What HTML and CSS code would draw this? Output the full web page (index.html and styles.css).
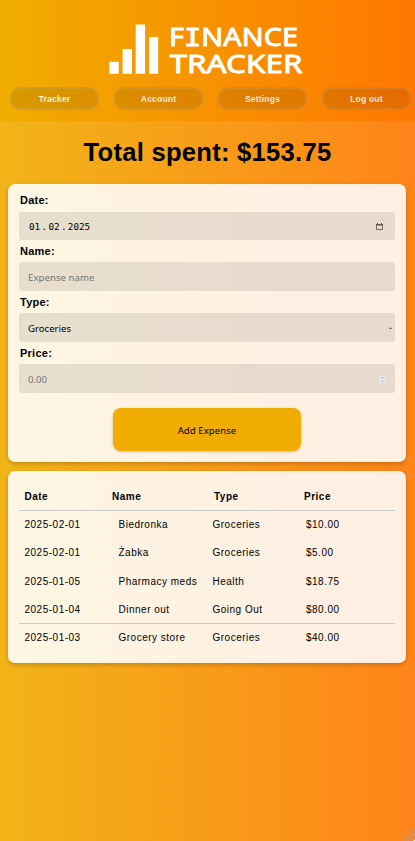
FILE: index.html
```html
<!DOCTYPE html>
<html lang="en">
<head>
<meta charset="utf-8">
<title>Finance Tracker</title>
<link rel="stylesheet" href="styles.css">
</head>
<body>
<header class="header">
  <svg class="logo" width="210" height="65" viewBox="0 0 210 65">
    <g fill="#fff">
      <rect x="9.3" y="46.8" width="9.4" height="12"/>
      <rect x="22.6" y="34" width="9.4" height="24.8"/>
      <rect x="35.7" y="9.5" width="9.4" height="49.3"/>
      <rect x="49" y="22" width="9.2" height="36.8"/>
    </g>
    <g class="logo-text">
      <text x="69" y="31" textLength="129" lengthAdjust="spacingAndGlyphs">F<tspan class="slab">I</tspan>NANCE</text>
      <text x="69.5" y="58" textLength="133" lengthAdjust="spacingAndGlyphs">TRACKER</text>
    </g>
  </svg>
  <nav class="nav">
    <a>Tracker</a><a>Account</a><a>Settings</a><a>Log out</a>
  </nav>
</header>
<main>
  <h1>Total spent: $153.75</h1>
  <form class="card form">
    <label>Date:</label>
    <div class="field date"><span class="num">01</span><span class="dot">.</span><span class="num">02</span><span class="dot">.</span><span class="num">2025</span>
      <svg class="calendar" width="7" height="7" viewBox="0 0 7 7"><path d="M.5 1.5h6v5h-6z" fill="none" stroke="#716b65"/><path d="M0 1h7v1.6H0zM1 0h1v1H1zM5 0h1v1H5z" fill="#5b554f"/></svg>
    </div>
    <label>Name:</label>
    <div class="field hint name-hint">Expense name</div>
    <label>Type:</label>
    <div class="field select">Groceries
      <svg class="caret" width="3" height="3" viewBox="0 0 3 3"><path d="M0 .5 1.5 2 3 .5" fill="none" stroke="#333"/></svg>
    </div>
    <label>Price:</label>
    <div class="field hint">0.00
      <svg class="spinner" width="7" height="7" viewBox="0 0 7 7"><path d="M0 0h7v7H0z" fill="#e8e6e8"/><path d="M2.2 2.5 3.5 1.2l1.3 1.3M2.2 4.5l1.3 1.3 1.3-1.3" fill="none" stroke="#a5a3a5" stroke-width=".8"/></svg>
    </div>
    <button type="button">Add Expense</button>
  </form>
  <section class="card expenses">
    <div class="row head"><b>Date</b><b>Name</b><b>Type</b><b>Price</b></div>
    <div class="row"><span>2025-02-01</span><span>Biedronka</span><span>Groceries</span><span>$10.00</span></div>
    <div class="row"><span>2025-02-01</span><span>Żabka</span><span>Groceries</span><span>$5.00</span></div>
    <div class="row"><span>2025-01-05</span><span>Pharmacy meds</span><span>Health</span><span>$18.75</span></div>
    <div class="row ruled"><span>2025-01-04</span><span>Dinner out</span><span>Going Out</span><span>$80.00</span></div>
    <div class="row"><span>2025-01-03</span><span>Grocery store</span><span>Groceries</span><span>$40.00</span></div>
  </section>
</main>
<svg class="grip" width="12" height="12" viewBox="0 0 12 12"><path d="M0 12 12 0M5 12l7-7" stroke="#b59b7b" stroke-width="1.5"/><path d="M10 12l2-2v2z" fill="#eee"/></svg>
</body>
</html>
```
FILE: styles.css
```css
* { box-sizing: border-box; }
html { height: 100%; }
body {
  margin: 0;
  height: 841px;
  overflow: hidden;
  background: linear-gradient(90deg, #f1b418, #ff8419);
  font-family: "Liberation Sans", Arial, sans-serif;
  color: #000;
}
.header {
  height: 121px;
  padding-top: 15px;
  background: linear-gradient(90deg, #f0ad00, #ff7700);
}
.logo { display: block; margin-left: 100px; }
.logo-text {
  font-family: "Noto Sans", sans-serif;
  font-size: 25px;
  fill: #fff;
  stroke: #fff;
  stroke-width: .9px;
  stroke-linejoin: round;
}
.slab { font-family: "DejaVu Sans Mono", monospace; }
.nav {
  display: grid;
  grid-template-columns: repeat(4, 89px);
  column-gap: 15px;
  padding: 7px 0 0 10px;
}
.nav a {
  height: 23px;
  border: 2px solid rgba(190, 170, 130, .25);
  border-radius: 10px;
  background: rgba(0, 0, 0, .1);
  color: rgba(255, 255, 255, .85);
  font-size: 8.5px;
  font-weight: bold;
  letter-spacing: .2px;
  line-height: 20px;
  text-align: center;
}
h1 {
  margin: 0;
  height: 63px;
  font-size: 25.6px;
  letter-spacing: .25px;
  line-height: 62px;
  text-align: center;
}
.card {
  margin: 0 9px 9px 8px;
  border-radius: 7px;
  background: linear-gradient(90deg, #fef6e2, #fff0e3 70%);
  box-shadow: 0 2px 4px rgba(0, 0, 0, .2);
}
.form { height: 278px; padding: 6px 11px 0; }
label {
  display: block;
  height: 22px;
  padding-left: 1px;
  font-size: 11px;
  font-weight: bold;
  letter-spacing: .25px;
  line-height: 21px;
}
.field ~ label { line-height: 23px; }
.field {
  display: flex;
  align-items: center;
  height: 29px;
  padding: 2px 9px 0;
  border-radius: 3px;
  background: rgba(0, 0, 0, .09);
  font-family: "Noto Sans", sans-serif;
  font-size: 9.6px;
  white-space: nowrap;
}
.field svg { margin-left: auto; }
.date { height: 28px; padding: 0 12px 0 10px; font-family: "DejaVu Sans Mono", monospace; font-size: 9.3px; }
.dot { width: 8.2px; text-align: center; }
.hint { color: #757575; }
.name-hint { letter-spacing: .05px; }
.select { padding-right: 3px; }
button {
  display: block;
  width: 188px;
  height: 43px;
  margin: 15px auto 0;
  border: 0;
  border-radius: 8px;
  background: #f0ad00;
  box-shadow: 0 1px 3px rgba(0, 0, 0, .22);
  color: #000;
  font: 9.6px "Noto Sans", sans-serif;
  letter-spacing: .05px;
  padding-top: 3px;
}
.expenses { height: 192px; padding: 11px 11px 0; }
.row {
  display: grid;
  grid-template-columns: 94px 94px 93.5px 1fr;
  height: 28.25px;
  padding-left: 5.5px;
  font-size: 10px;
  letter-spacing: .5px;
  line-height: 28px;
  white-space: nowrap;
}
.head {
  grid-template-columns: 87.5px 102px 90px 1fr;
  height: 29px;
  line-height: 30px;
  border-bottom: 1px solid #c9c9c9;
}
.ruled { border-bottom: 1px solid #cfcbc7; }
.grip { position: absolute; right: 0; bottom: 0; }
```
